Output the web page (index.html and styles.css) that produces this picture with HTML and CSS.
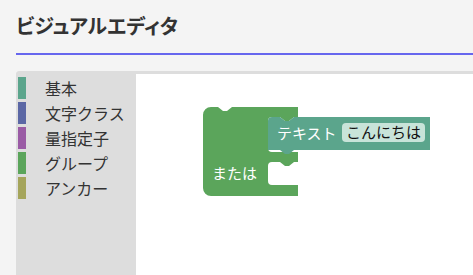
FILE: index.html
```html
<!DOCTYPE html>
<html>
<head>
  <link rel="stylesheet" href="styles.css">
</head>
<body>

<h1 class="title">ビジュアルエディタ</h1>

<div class="editor">
  <!-- Category list -->
  <ul class="toolbox">
    <li><span class="mark mark-basic"></span>基本</li>
    <li><span class="mark mark-class"></span>文字クラス</li>
    <li><span class="mark mark-quant"></span>量指定子</li>
    <li><span class="mark mark-group"></span>グループ</li>
    <li><span class="mark mark-anchor"></span>アンカー</li>
  </ul>

  <div class="workspace">
    <svg class="blocks" width="337" height="204">
      <g transform="translate(-136,-74)">
        <!-- "または" block with two statement inputs -->
        <path class="block-or" d="M 203,115 a 8,8 0 0 1 8,-8 H 218 l 5,4 h 4 l 5,-4 H 298 V 117 H 294 l -5,4 h -4 l -5,-4 H 272 a 4,4 0 0 0 -4,4 V 148 a 4,4 0 0 0 4,4 H 298 V 162 H 294 l -5,4 h -4 l -5,-4 H 272 a 4,4 0 0 0 -4,4 V 181 a 4,4 0 0 0 4,4 H 298 V 196 H 211 a 8,8 0 0 1 -8,-8 Z"/>
        <text class="block-label" x="212" y="179">または</text>

        <!-- "テキスト" block -->
        <path class="block-text" d="M 268,121 a 4,4 0 0 1 4,-4 H 280 l 5,4 h 4 l 5,-4 H 430 V 150 H 294 l -5,4 h -4 l -5,-4 H 268 Z"/>
        <text class="block-label" x="277" y="139">テキスト</text>
        <rect class="field" x="342" y="123" width="83" height="19" rx="4" ry="4"/>
        <text class="field-text" x="346" y="138">こんにちは</text>
      </g>
    </svg>
  </div>
</div>

</body>
</html>
```

FILE: styles.css
```css
/* Page */
body {
  margin: 0;
  padding: 0 0 0 16px;
  background-color: #f4f4f4;
  font-family: "Noto Sans CJK JP", "Noto Sans", sans-serif;
  color: #333;
  overflow: hidden;
}

/* Heading with the blue rule */
.title {
  margin: 0;
  padding: 11px 0 13px 0;
  font-size: 20px;
  line-height: 29px;
  font-weight: bold;
  font-feature-settings: "palt";
  border-bottom: 2px solid #6666ee;
}

/* Editor frame */
.editor {
  display: flex;
  margin-top: 16px;
  height: 210px;
  border-top: 3px solid #dddddd;
  border-top-left-radius: 4px;
}

/* Category list */
.toolbox {
  list-style: none;
  margin: -3px 0 0 0;
  padding: 6px 0 0 2px;
  width: 118px;
  background-color: #dddddd;
  border-top-left-radius: 4px;
}
.toolbox li {
  display: flex;
  align-items: center;
  height: 22px;
  margin-bottom: 3px;
  font-size: 16px;
  line-height: 22px;
  color: #333;
}
.mark {
  width: 8px;
  height: 22px;
  margin-right: 19px;
}
.mark-basic { background-color: #5ba58c; }
.mark-class { background-color: #5b67a5; }
.mark-quant { background-color: #9a5ba5; }
.mark-group { background-color: #5ba55b; }
.mark-anchor { background-color: #a5a55b; }

/* Block canvas */
.workspace {
  flex: 1;
  position: relative;
  background-color: #fff;
}
.blocks {
  position: absolute;
  left: 0;
  top: 0;
}
.block-or {
  fill: #5ba55b;
}
.block-text {
  fill: #5ba58c;
}
.block-label {
  fill: #fff;
  font-size: 15px;
}
.field {
  fill: #c8e4d9;
}
.field-text {
  fill: #111;
  font-size: 15px;
}
```
